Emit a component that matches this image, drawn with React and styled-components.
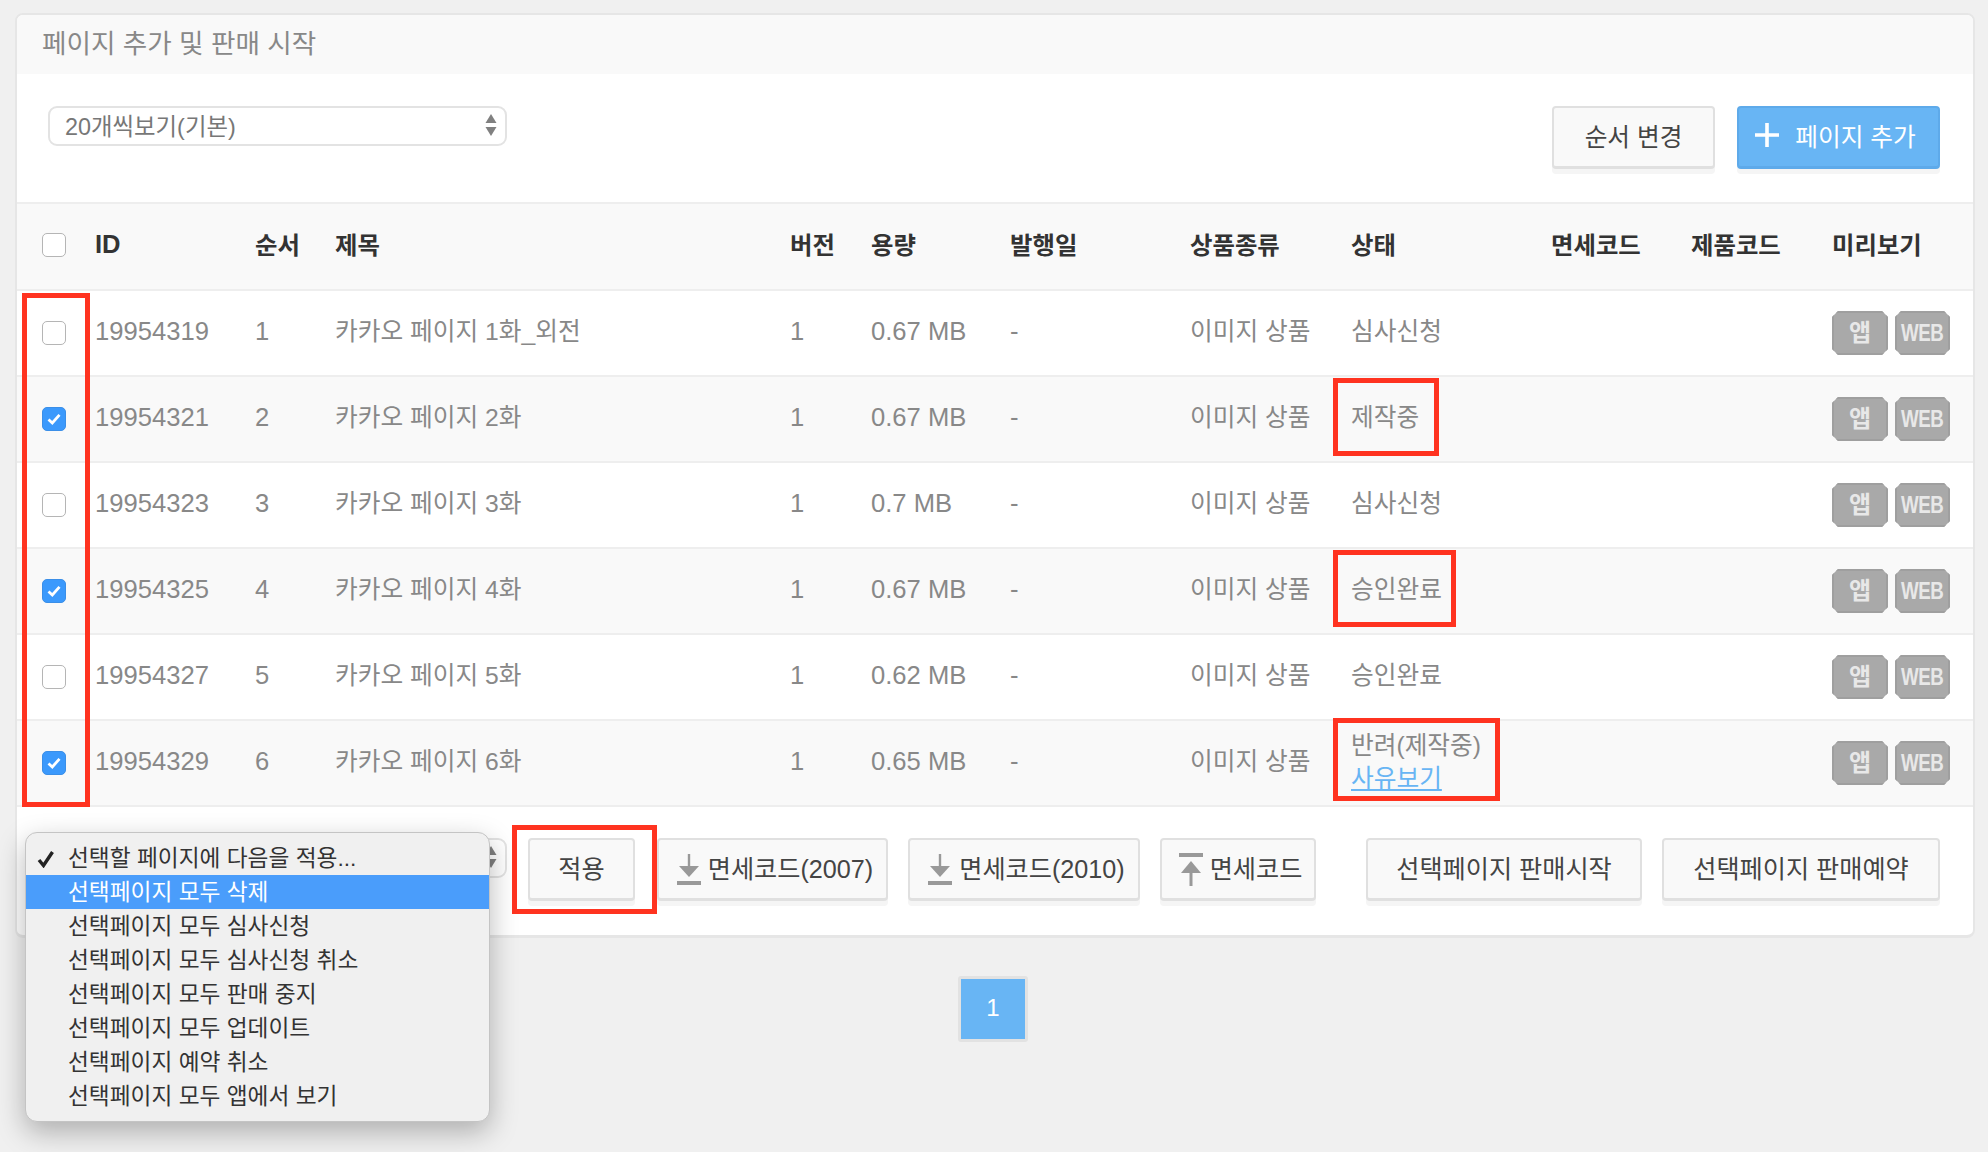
import styled, { createGlobalStyle } from 'styled-components';

const GlobalStyle = createGlobalStyle`
  html, body {
    margin: 0;
    padding: 0;
    background: #f0f0f0;
  }
  * {
    box-sizing: border-box;
  }
  body {
    font-family: "Liberation Sans", "Noto Sans CJK KR", sans-serif;
    font-size: 24.6px;
    color: #888;
  }
`;

const Page = styled.div`
  width: 1988px;
  height: 1152px;
  padding: 13px 13px 0 15px;
  overflow: hidden;
`;
const Card = styled.div`
  background: #fff;
  border: 2px solid #e6e6e6;
  border-bottom-width: 3px;
  border-radius: 8px;
`;
const CardTitle = styled.div`
  height: 59px;
  padding-left: 25px;
  background: #f9f9f9;
  border-radius: 6px 6px 0 0;
  color: #888;
  font-size: 26.6px;
  line-height: 58px;
`;
const Toolbar = styled.div`
  display: flex;
  justify-content: space-between;
  align-items: flex-start;
  height: 128px;
  padding: 32px 33px 0 31px;
`;
const SelectBox = styled.div`
  position: relative;
  display: flex;
  align-items: center;
  justify-content: space-between;
  width: 459px;
  height: 40px;
  padding: 0 8px 2px 15px;
  background: #fff;
  border: 2px solid #e3e3e3;
  border-radius: 9px;
  color: #777;
  font-size: 23.4px;
`;
const FooterSelect = styled(SelectBox)`
  justify-content: flex-end;
`;
const ToolbarButtons = styled.div`
  display: flex;
  gap: 22px;
`;
const Button = styled.button`
  display: flex;
  align-items: center;
  justify-content: center;
  gap: ${(p) => p.$gap || 0}px;
  width: ${(p) => p.$width}px;
  height: 63px;
  padding: 0 0 4px ${(p) => (p.$icon ? 5 : 0)}px;
  background: #f9f9f9;
  border: 2px solid #e0e0e0;
  border-bottom-width: 3px;
  border-radius: 4px;
  box-shadow: 0 5px 0 #f5f5f5;
  color: #444;
  font-family: inherit;
  font-size: 24.7px;
`;
const PrimaryButton = styled(Button)`
  background: #68b5f4;
  border-color: #5eaaea;
  color: #fff;
  padding-right: 6px;
`;
const FooterButton = styled(Button)`
  font-size: 25.2px;
`;

const TableWrap = styled.div`
  position: relative;
`;
const Table = styled.table`
  width: 100%;
  table-layout: fixed;
  border-collapse: separate;
  border-spacing: 0;
`;
const HeadCell = styled.th`
  height: 87px;
  padding: 0 0 ${(p) => (p.$latin ? 5 : 7)}px;
  background: #f9f9f9;
  border-top: 2px solid #eee;
  color: #333;
  font-size: ${(p) => (p.$latin ? 25.6 : 24.4)}px;
  font-weight: 700;
  text-align: left;
`;
const Row = styled.tr`
  background: ${(p) => (p.$even ? '#f9f9f9' : '#fff')};
`;
const Cell = styled.td`
  position: relative;
  height: ${(p) => (p.$last ? 88 : 86)}px;
  padding: 0 0 3px;
  border-top: 2px solid #eee;
  border-bottom: ${(p) => (p.$last ? '2px solid #eee' : '0')};
  color: #888;
  font-size: ${(p) => (p.$latin ? 25.6 : 24.7)}px;
  line-height: 33px;
`;
const CheckCell = styled(Cell)`
  padding-left: 25px;
  padding-bottom: 1px;
`;
const PreviewCell = styled(Cell)`
  padding-bottom: 0;
`;
const HeadCheckCell = styled(HeadCell)`
  padding-left: 25px;
  padding-bottom: 4px;
`;
const CheckBox = styled.span`
  display: flex;
  align-items: center;
  justify-content: center;
  width: 24px;
  height: 24px;
  background: ${(p) => (p.$checked ? '#3b99fc' : '#fff')};
  border: 1px solid ${(p) => (p.$checked ? '#3b8fe8' : '#b5b5b5')};
  border-radius: 5px;
`;
const PreviewButtons = styled.div`
  display: flex;
  gap: 7px;
`;
const PreviewButton = styled.span`
  display: flex;
  align-items: center;
  justify-content: center;
  width: ${(p) => p.$width}px;
  height: 44px;
  padding-bottom: 2px;
  background: #a9a9a9;
  border: 2px solid #9f9f9f;
  clip-path: polygon(6px 0, calc(100% - 6px) 0, 100% 6px, 100% calc(100% - 6px), calc(100% - 6px) 100%, 6px 100%, 0 calc(100% - 6px), 0 6px);
  color: #e8e8e8;
  font-size: 24px;
  font-weight: 700;
`;
const WebLabel = styled.span`
  display: inline-block;
  font-size: 24px;
  font-weight: 700;
  letter-spacing: -0.5px;
  transform: scaleX(0.78);
`;
const ReasonLink = styled.a`
  color: #68b5f4;
  text-decoration: underline;
`;
const RedBox = styled.div`
  position: absolute;
  top: ${(p) => p.$top}px;
  left: ${(p) => p.$left}px;
  width: ${(p) => p.$width}px;
  height: ${(p) => p.$height}px;
  border: 5px solid #ff3320;
  pointer-events: none;
`;

const Footer = styled.div`
  display: flex;
  align-items: flex-start;
  height: 128px;
  padding: 31px 30px 0 31px;
`;
const FooterGroup = styled.div`
  position: relative;
  display: flex;
  gap: ${(p) => p.$gap}px;
  margin-left: ${(p) => p.$offset}px;
`;
const IconWrap = styled.svg`
  flex: none;
  margin-top: 6px;
`;
const Popup = styled.ul`
  position: absolute;
  top: -8px;
  left: -25px;
  z-index: 5;
  width: 465px;
  margin: 0;
  padding: 8px 0;
  list-style: none;
  background: #f0f0f0;
  border: 1px solid #c4c4c4;
  border-radius: 12px;
  box-shadow: 0 10px 28px rgba(0, 0, 0, 0.28);
`;
const PopupItem = styled.li`
  position: relative;
  height: 34px;
  padding-left: 42px;
  background: ${(p) => (p.$active ? '#4a9dfb' : 'transparent')};
  color: ${(p) => (p.$active ? '#fff' : '#333')};
  font-size: 22.7px;
  line-height: 34px;
`;
const PopupCheck = styled.svg`
  position: absolute;
  top: 9px;
  left: 11px;
`;
const Pagination = styled.div`
  display: flex;
  justify-content: center;
  padding: 38px 4px 0 0;
`;
const PageNumber = styled.span`
  width: 70px;
  height: 66px;
  background: #68b5f4;
  border: 3px solid #e2e2e2;
  border-radius: 3px;
  color: #fff;
  font-size: 24px;
  line-height: 58px;
  text-align: center;
`;

const columns = [78, 160, 80, 455, 81, 139, 180, 161, 200, 140, 141, 141];
const headers = ['순서', '제목', '버전', '용량', '발행일', '상품종류', '상태', '면세코드', '제품코드', '미리보기'];
const rows = [
  { id: 19954319, title: '카카오 페이지 1화_외전', size: '0.67 MB', status: '심사신청' },
  { id: 19954321, title: '카카오 페이지 2화', size: '0.67 MB', status: '제작중', box: { top: 1, left: -18, width: 106, height: 78 } },
  { id: 19954323, title: '카카오 페이지 3화', size: '0.7 MB', status: '심사신청' },
  { id: 19954325, title: '카카오 페이지 4화', size: '0.67 MB', status: '승인완료', box: { top: 1, left: -18, width: 123, height: 77 } },
  { id: 19954327, title: '카카오 페이지 5화', size: '0.62 MB', status: '승인완료' },
  { id: 19954329, title: '카카오 페이지 6화', size: '0.65 MB', status: '반려(제작중)', reason: true, box: { top: -3, left: -18, width: 167, height: 83 } },
];
const popupItems = [
  '선택페이지 모두 삭제',
  '선택페이지 모두 심사신청',
  '선택페이지 모두 심사신청 취소',
  '선택페이지 모두 판매 중지',
  '선택페이지 모두 업데이트',
  '선택페이지 예약 취소',
  '선택페이지 모두 앱에서 보기',
];

function SelectArrows() {
  return (
    <svg width="12" height="24" viewBox="0 0 12 24">
      <path d="M6 1 L11.5 10 H0.5 Z" fill="#808080" />
      <path d="M6 23 L11.5 14 H0.5 Z" fill="#808080" />
    </svg>
  );
}

function TickMark() {
  return (
    <svg width="16" height="14" viewBox="0 0 16 14">
      <path d="M2.5 7.5 L6.3 11 L13.5 2.8" fill="none" stroke="#fff" strokeWidth="2.8" />
    </svg>
  );
}

function Download() {
  return (
    <IconWrap width="24" height="34" viewBox="0 0 24 34">
      <path d="M12 1 V14" stroke="#999" strokeWidth="2.4" />
      <path d="M2 13 H22 L12 24 Z" fill="#999" />
      <rect x="0" y="28" width="24" height="4" fill="#999" />
    </IconWrap>
  );
}

function Upload() {
  return (
    <IconWrap width="24" height="34" viewBox="0 0 24 34">
      <rect x="0" y="0" width="24" height="4" fill="#999" />
      <path d="M12 8 L22 20 H2 Z" fill="#999" />
      <path d="M12 18 V33" stroke="#999" strokeWidth="3" />
    </IconWrap>
  );
}

function App() {
  return (
    <Page>
      <GlobalStyle />
      <Card>
        <CardTitle>페이지 추가 및 판매 시작</CardTitle>
        <Toolbar>
          <SelectBox>
            20개씩보기(기본)
            <SelectArrows />
          </SelectBox>
          <ToolbarButtons>
            <Button $width={163}>순서 변경</Button>
            <PrimaryButton $width={203} $gap={16}>
              <svg width="24" height="24" viewBox="0 0 24 24">
                <path d="M12 0 V24 M0 12 H24" stroke="#fff" strokeWidth="3.6" />
              </svg>
              페이지 추가
            </PrimaryButton>
          </ToolbarButtons>
        </Toolbar>
        <TableWrap>
          <Table>
            <colgroup>
              {columns.map((width, i) => (
                <col key={i} width={width} />
              ))}
            </colgroup>
            <thead>
              <tr>
                <HeadCheckCell>
                  <CheckBox />
                </HeadCheckCell>
                <HeadCell $latin>ID</HeadCell>
                {headers.map((name) => (
                  <HeadCell key={name}>{name}</HeadCell>
                ))}
              </tr>
            </thead>
            <tbody>
              {rows.map((row, i) => (
                <Row key={row.id} $even={i % 2 === 1}>
                  <CheckCell $last={i === 5}>
                    <CheckBox $checked={i % 2 === 1}>{i % 2 === 1 && <TickMark />}</CheckBox>
                  </CheckCell>
                  <Cell $latin $last={i === 5}>{row.id}</Cell>
                  <Cell $latin $last={i === 5}>{i + 1}</Cell>
                  <Cell $last={i === 5}>{row.title}</Cell>
                  <Cell $latin $last={i === 5}>1</Cell>
                  <Cell $latin $last={i === 5}>{row.size}</Cell>
                  <Cell $latin $last={i === 5}>-</Cell>
                  <Cell $last={i === 5}>이미지 상품</Cell>
                  <Cell $last={i === 5}>
                    {row.status}
                    {row.reason && (
                      <>
                        <br />
                        <ReasonLink>사유보기</ReasonLink>
                      </>
                    )}
                    {row.box && <RedBox $top={row.box.top} $left={row.box.left} $width={row.box.width} $height={row.box.height} />}
                  </Cell>
                  <Cell $last={i === 5} />
                  <Cell $last={i === 5} />
                  <PreviewCell $last={i === 5}>
                    <PreviewButtons>
                      <PreviewButton $width={56}>앱</PreviewButton>
                      <PreviewButton $width={55}>
                        <WebLabel>WEB</WebLabel>
                      </PreviewButton>
                    </PreviewButtons>
                  </PreviewCell>
                </Row>
              ))}
            </tbody>
          </Table>
          <RedBox $top={91} $left={5} $width={68} $height={514} />
        </TableWrap>
        <Footer>
          <FooterSelect>
            <SelectArrows />
            <Popup>
              <PopupItem>
                <PopupCheck width="18" height="18" viewBox="0 0 18 18">
                  <path d="M2 10 L6.5 15.5 L15.5 2" fill="none" stroke="#222" strokeWidth="3.4" />
                </PopupCheck>
                선택할 페이지에 다음을 적용...
              </PopupItem>
              {popupItems.map((item, i) => (
                <PopupItem key={item} $active={i === 0}>{item}</PopupItem>
              ))}
            </Popup>
          </FooterSelect>
          <FooterGroup $gap={22} $offset={21}>
            <FooterButton $width={107}>적용</FooterButton>
            <RedBox $top={-13} $left={-16} $width={145} $height={89} />
            <FooterButton $width={231} $gap={7} $icon>
              <Download />
              면세코드(2007)
            </FooterButton>
          </FooterGroup>
          <FooterGroup $gap={20} $offset={20}>
            <FooterButton $width={232} $gap={7} $icon>
              <Download />
              면세코드(2010)
            </FooterButton>
            <FooterButton $width={156} $gap={7} $icon>
              <Upload />
              면세코드
            </FooterButton>
          </FooterGroup>
          <FooterGroup $gap={20} $offset={50}>
            <FooterButton $width={276}>선택페이지 판매시작</FooterButton>
            <FooterButton $width={278}>선택페이지 판매예약</FooterButton>
          </FooterGroup>
        </Footer>
      </Card>
      <Pagination>
        <PageNumber>1</PageNumber>
      </Pagination>
    </Page>
  );
}

export default App;
